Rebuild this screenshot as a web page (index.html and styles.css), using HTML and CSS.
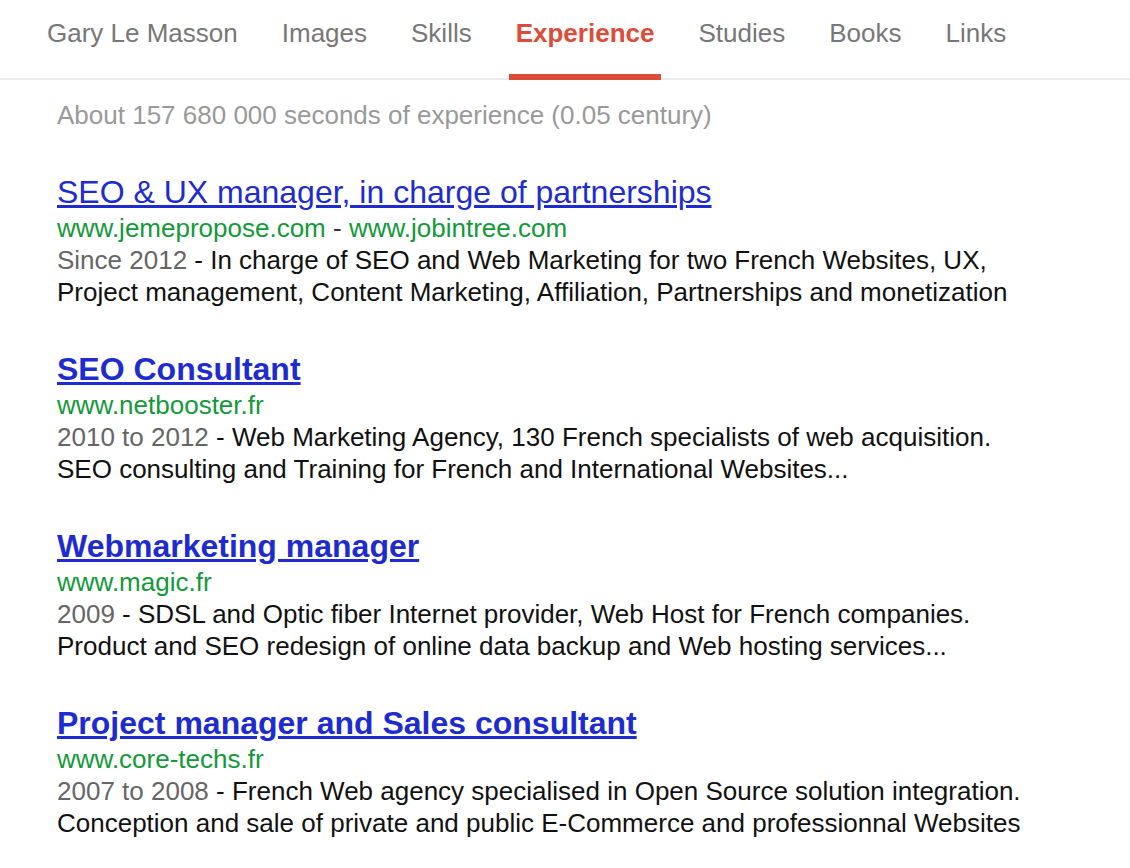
FILE: index.html
```html
<!DOCTYPE html>
<html lang="en">
<head>
<meta charset="utf-8">
<title>Gary Le Masson - Experience</title>
<link rel="stylesheet" href="styles.css">
</head>
<body>
<nav class="tabs">
  <a class="tab" href="#">Gary Le Masson</a>
  <a class="tab" href="#">Images</a>
  <a class="tab" href="#">Skills</a>
  <a class="tab tab-active" href="#">Experience</a>
  <a class="tab" href="#">Studies</a>
  <a class="tab" href="#">Books</a>
  <a class="tab" href="#">Links</a>
</nav>
<main class="results">
  <p class="stats">About 157 680 000 seconds of experience (0.05 century)</p>

  <section class="result">
    <a class="title title-light" href="#">SEO &amp; UX manager, in charge of partnerships</a>
    <div class="url"><span class="green">www.jemepropose.com</span> <span class="dash">-</span> <span class="green">www.jobintree.com</span></div>
    <p class="desc"><span class="date">Since 2012</span> - In charge of SEO and Web Marketing for two French Websites, UX, Project management, Content Marketing, Affiliation, Partnerships and monetization</p>
  </section>

  <section class="result">
    <a class="title" href="#">SEO Consultant</a>
    <div class="url"><span class="green">www.netbooster.fr</span></div>
    <p class="desc"><span class="date">2010 to 2012</span> - Web Marketing Agency, 130 French specialists of web acquisition. SEO consulting and Training for French and International Websites...</p>
  </section>

  <section class="result">
    <a class="title" href="#">Webmarketing manager</a>
    <div class="url"><span class="green">www.magic.fr</span></div>
    <p class="desc"><span class="date">2009</span> - SDSL and Optic fiber Internet provider, Web Host for French companies. Product and SEO redesign of online data backup and Web hosting services...</p>
  </section>

  <section class="result">
    <a class="title" href="#">Project manager and Sales consultant</a>
    <div class="url"><span class="green">www.core-techs.fr</span></div>
    <p class="desc"><span class="date">2007 to 2008</span> - French Web agency specialised in Open Source solution integration. Conception and sale of private and public E-Commerce and professionnal Websites</p>
  </section>
</main>
</body>
</html>
```
FILE: styles.css
```css
* {
  box-sizing: border-box;
}

html, body {
  margin: 0;
  padding: 0;
  background: #ffffff;
}

body {
  font-family: "Liberation Sans", Arial, Helvetica, sans-serif;
  font-size: 26px;
  color: #111111;
  overflow-x: hidden;
}

.tabs {
  display: flex;
  align-items: flex-end;
  padding: 18px 0 0 40px;
  border-bottom: 2px solid #ebebeb;
}

.tab {
  display: block;
  padding: 0 7px 26px;
  margin-right: 30px;
  margin-bottom: -2px;
  line-height: 30px;
  font-size: 26px;
  color: #777777;
  text-decoration: none;
  border-bottom: 6px solid transparent;
  white-space: nowrap;
}

.tab-active {
  color: #dd4b39;
  font-weight: bold;
  border-bottom-color: #dd4b39;
}

.results {
  padding: 19px 0 0 57px;
  width: 1047px;
}

.stats {
  margin: 0;
  line-height: 32px;
  color: #999999;
}

.result {
  margin-top: 41px;
}

.title {
  display: block;
  font-size: 32px;
  line-height: 40px;
  font-weight: bold;
  color: #1e2ccf;
  text-decoration: underline;
  white-space: nowrap;
}

.title-light {
  font-weight: normal;
}

.url {
  line-height: 32px;
}

.green {
  color: #13993a;
}

.dash {
  color: #333333;
}

.desc {
  margin: 0;
  line-height: 32px;
  color: #111111;
}

.date {
  color: #666666;
}
```
